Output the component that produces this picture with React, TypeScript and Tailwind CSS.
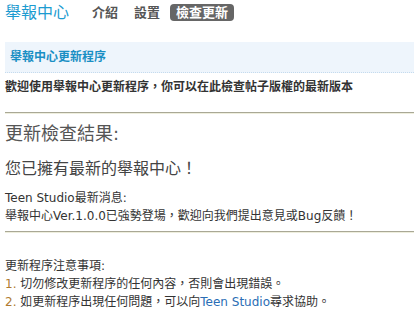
import React from "react";

const font = {
  fontFamily: '"DejaVu Sans", "Noto Sans CJK TC", sans-serif',
};

const NavItem = ({ label, active }: { label: string; active?: boolean }) =>
  active ? (
    <span className="rounded-[4px] bg-[#666666] px-[6px] py-[1px] text-[13px] font-bold leading-[18px] text-white">
      {label}
    </span>
  ) : (
    <span className="text-[13px] font-bold leading-[18px] text-[#555555]">{label}</span>
  );

const App = () => {
  return (
    <div className="h-[319px] w-[414px] overflow-hidden bg-white text-[12px] text-[#333333]" style={font}>
      <header className="flex items-center pl-[5px] pt-[3px]">
        <span className="text-[16px] leading-[20px] text-[#1c9bd0]">舉報中心</span>
        <nav className="ml-[23px] flex items-center gap-[16px]">
          <NavItem label="介紹" />
          <NavItem label="設置" />
          <span className="-ml-[6px]">
            <NavItem label="檢查更新" active />
          </span>
        </nav>
      </header>

      <div className="ml-[5px] mt-[19px] border-b border-dotted border-[#c5dbee] bg-[#eef5fc] px-[5px] py-[7px]">
        <h2 className="text-[12px] font-bold leading-[16px] text-[#1a8fc4]">舉報中心更新程序</h2>
      </div>

      <p className="ml-[5px] mt-[6px] font-bold leading-[16px] text-[#333333]">
        歡迎使用舉報中心更新程序，你可以在此檢查帖子版權的最新版本
      </p>

      <div className="ml-[5px] mt-[17px] h-[2px] border-b border-[#eeeedd] bg-[#a9a895]" />

      <div className="pl-[5px]">
        <h3 className="mt-[9px] text-[18px] leading-[22px] text-[#555555]">更新檢查結果:</h3>
        <p className="mt-[14px] text-[16px] leading-[20px] text-[#444444]">您已擁有最新的舉報中心！</p>
        <div className="mt-[10px] leading-[18px] text-[#333333]">
          <p>Teen Studio最新消息:</p>
          <p>舉報中心Ver.1.0.0已強勢登場，歡迎向我們提出意見或Bug反饋！</p>
        </div>
      </div>

      <div className="ml-[5px] mt-[6px] h-[2px] border-b border-[#eeeedd] bg-[#a9a895]" />

      <div className="mt-[24px] pl-[5px] leading-[18px] text-[#333333]">
        <p>更新程序注意事項:</p>
        <p>
          <span className="text-[#b07b30]">1.</span> 切勿修改更新程序的任何內容，否則會出現錯誤。
        </p>
        <p>
          <span className="text-[#b07b30]">2.</span> 如更新程序出現任何問題，可以向
          <span className="text-[#2a6db5]">Teen Studio</span>尋求協助。
        </p>
      </div>
    </div>
  );
};

export default App;
